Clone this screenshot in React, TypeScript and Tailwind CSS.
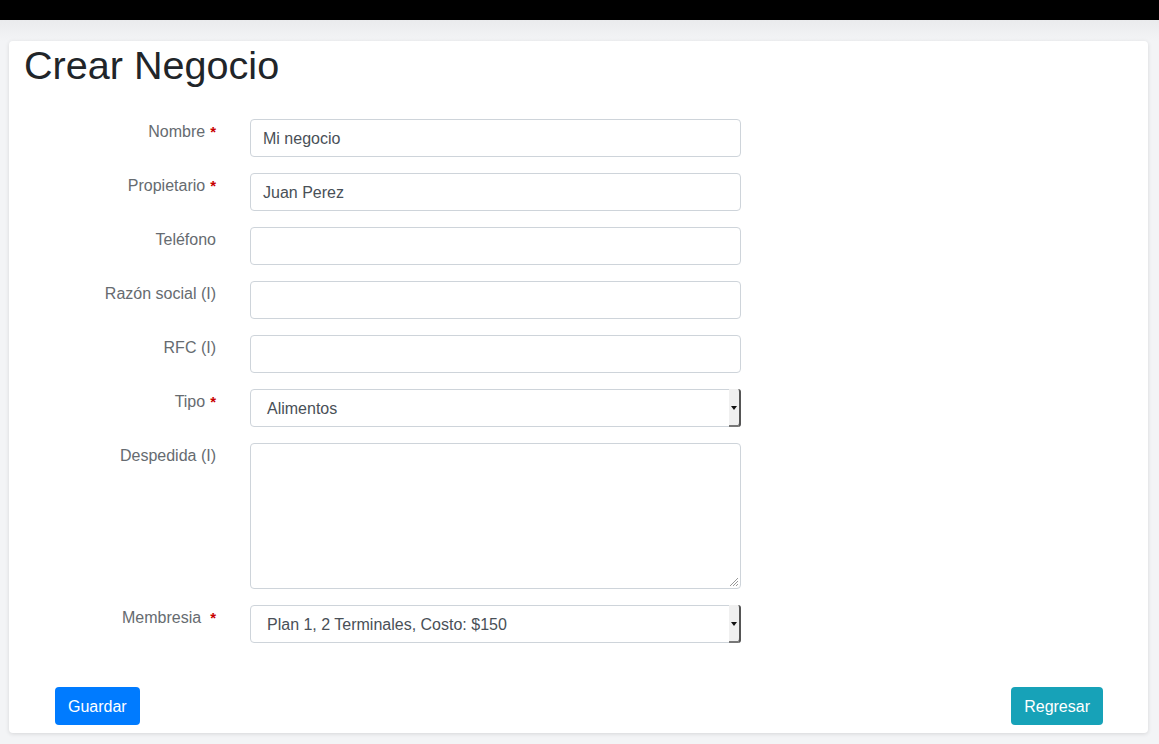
import React from "react";

const Label = ({ text, req, gap }: { text: string; req?: boolean; gap?: boolean }) => (
  <div className="w-[193px] shrink-0 text-right leading-6 text-[#666b70] pr-[1px] pt-[1px]">
    {text}
    {req && <span className={`text-[#c80000] text-[15px] font-bold ${gap ? "ml-[9px]" : "ml-[5px]"}`}>*</span>}
  </div>
);

const Input = ({ value }: { value?: string }) => (
  <div className="w-[491px] h-[38px] border border-[#ced4da] rounded-[4px] px-3 pt-[2px] flex items-center text-[#495057]">
    {value}
  </div>
);

const Select = ({ value }: { value: string }) => (
  <div className="w-[491px] h-[38px] border border-[#ced4da] rounded-[4px] flex items-center text-[#495057] relative">
    <span className="pl-4 pt-[2px]">{value}</span>
    <div className="absolute right-[-1px] top-[-1px] bottom-[-1px] w-[12px] bg-[#f0f0f0] border-r-2 border-[#555] rounded-r-[3px] flex items-center justify-center shadow-[inset_0_-2px_0_#777]">
      <svg width="6" height="4" viewBox="0 0 6 4"><path d="M0 0h6L3 4z" fill="#111" /></svg>
    </div>
  </div>
);

export default function App() {
  return (
    <div className="min-h-[744px] bg-[#f3f4f6] font-['Liberation_Sans',Arial,sans-serif] text-base">
      <div className="h-5 bg-black" />
      <div className="h-[21px] bg-gradient-to-b from-[#eaebed] to-[#f3f4f6]" />
      <div className="mx-[9px] w-[1139px] h-[692px] bg-white rounded-[4px] shadow-[0_1px_4px_rgba(0,0,0,0.12)] px-[15px] flex flex-col">
        <h1 className="text-[39.6px] leading-[48px] text-[#212529] mb-[30px]">Crear Negocio</h1>
        <div className="flex flex-col gap-4 pl-[0px]">
          <div className="flex gap-[33px]"><Label text="Nombre" req /><Input value="Mi negocio" /></div>
          <div className="flex gap-[33px]"><Label text="Propietario" req /><Input value="Juan Perez" /></div>
          <div className="flex gap-[33px]"><Label text="Teléfono" /><Input /></div>
          <div className="flex gap-[33px]"><Label text="Razón social (I)" /><Input /></div>
          <div className="flex gap-[33px]"><Label text="RFC (I)" /><Input /></div>
          <div className="flex gap-[33px]"><Label text="Tipo" req /><Select value="Alimentos" /></div>
          <div className="flex gap-[33px]">
            <Label text="Despedida (I)" />
            <div className="w-[491px] h-[146px] border border-[#ced4da] rounded-[4px] relative">
              <svg className="absolute right-[1px] bottom-[1px]" width="10" height="10" viewBox="0 0 10 10">
                <path d="M9 1L1 9M9 4L4 9M9 7L7 9" stroke="#999" strokeWidth="1" />
              </svg>
            </div>
          </div>
          <div className="flex gap-[33px]"><Label text="Membresia" req gap /><Select value="Plan 1, 2 Terminales, Costo: $150" /></div>
        </div>
        <div className="flex justify-between mt-[44px] px-[31px] pr-[30px]">
          <button className="h-[38px] px-[13px] pt-[1px] bg-[#007bff] text-white rounded-[4px]">Guardar</button>
          <button className="h-[38px] px-[13px] pt-[1px] bg-[#17a2b8] text-white rounded-[4px]">Regresar</button>
        </div>
      </div>
    </div>
  );
}
